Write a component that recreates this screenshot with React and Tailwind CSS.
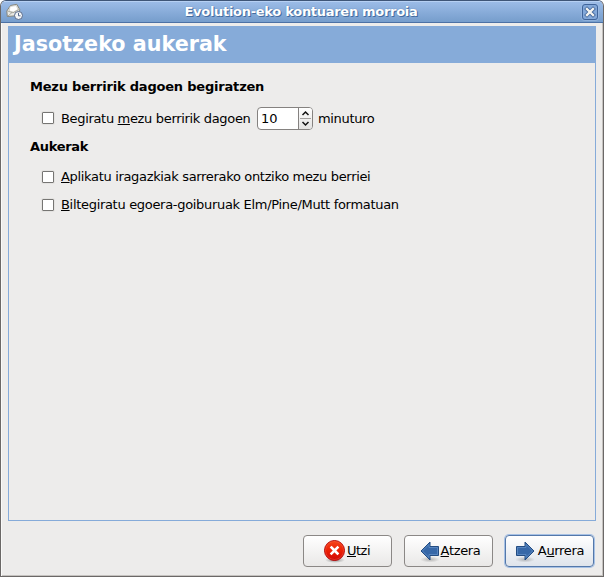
import React from "react";

function Checkbox() {
  return (
    <span
      role="checkbox"
      aria-checked="false"
      className="block h-[12px] w-[12px] shrink-0 rounded-[1px] border border-[#767573] bg-white shadow-[0_0_0_1px_#e4e3e1]"
    />
  );
}

function Key({ children }) {
  return <span className="underline decoration-1 underline-offset-[1px]">{children}</span>;
}

function MailClockIcon() {
  return (
    <svg width="18" height="18" viewBox="0 0 18 18" aria-hidden="true">
      <path d="M.8 8 4.5 2.5 10.8 1.3 13.7 6.5 13.2 12.5 1.3 13.5Z" fill="#e9e9e4" stroke="#85857c" />
      <path d="M4 3.5 10.3 2.5 12 6.5 7.5 9 3.3 8Z" fill="#fff" stroke="#bdbdb6" strokeWidth=".6" />
      <path d="M1.5 8 7 9.8 13 6.5M2 13 6 9.5" fill="none" stroke="#99998f" strokeWidth=".8" />
      <circle cx="12.5" cy="12.5" r="4" fill="#f4f6f8" stroke="#57698a" />
      <path d="M12.5 9.8v3h2" fill="none" stroke="#57698a" />
    </svg>
  );
}

function CloseIcon() {
  return (
    <svg width="18" height="18" viewBox="0 0 18 18" aria-hidden="true">
      <rect x=".5" y=".5" width="17" height="17" rx="3" fill="none" stroke="#a5c2e8" strokeOpacity=".5" />
      <rect x="1.5" y="1.5" width="15" height="15" rx="2.5" fill="#83a8d9" stroke="#3f649a" />
      <path d="m6 6 6 6m0-6-6 6" stroke="#3f6499" strokeWidth="4" strokeLinecap="square" />
      <path d="m6 6 6 6m0-6-6 6" stroke="#f5f4f0" strokeWidth="2.4" strokeLinecap="square" />
    </svg>
  );
}

function CancelIcon() {
  return (
    <svg width="24" height="24" viewBox="0 0 24 24" className="shrink-0" aria-hidden="true">
      <defs>
        <linearGradient id="cancel" x2="0" y2="1">
          <stop stopColor="#f4471b" />
          <stop offset=".5" stopColor="#ec2005" />
          <stop offset="1" stopColor="#cf0808" />
        </linearGradient>
        <radialGradient id="shade">
          <stop stopColor="#000" stopOpacity=".4" />
          <stop offset="1" stopColor="#000" stopOpacity="0" />
        </radialGradient>
      </defs>
      <ellipse cx="12" cy="21" rx="10" ry="3" fill="url(#shade)" />
      <circle cx="11.5" cy="11.5" r="10" fill="url(#cancel)" stroke="#b50b0b" />
      <circle cx="11.5" cy="11.5" r="9" fill="none" stroke="#ff6448" strokeOpacity=".4" />
      <path d="m8.5 8.5 6 6m0-6-6 6" stroke="#fff" strokeWidth="2.5" strokeLinecap="square" />
    </svg>
  );
}

function ArrowIcon({ back }) {
  return (
    <svg width="24" height="24" viewBox="0 0 24 24" aria-hidden="true" className={back ? "shrink-0 -scale-x-100" : "shrink-0"}>
      <defs>
        <radialGradient id={back ? "shadowBack" : "shadowNext"}>
          <stop stopColor="#000" stopOpacity=".25" />
          <stop offset="1" stopColor="#000" stopOpacity="0" />
        </radialGradient>
      </defs>
      <ellipse cx="11" cy="20.5" rx="10" ry="3" fill={back ? "url(#shadowBack)" : "url(#shadowNext)"} />
      <path d="M2.5 7.5H11V3L20 12 11 21V16.5H2.5Z" fill="#3768a8" stroke="#234c82" />
      <path d="M3.5 15.5V8.5H12V5.4L18.6 12 12 18.6V15.5Z" fill="none" stroke="#6c99cf" strokeOpacity=".6" />
    </svg>
  );
}

const button =
  "flex h-[32px] w-[89px] items-center justify-center rounded-[4px] border whitespace-nowrap";

export default function App() {
  return (
    <div className="h-[577px] w-[604px] overflow-hidden bg-white font-['DejaVu_Sans',sans-serif] text-[13px] leading-[16px] tracking-[-0.33px] text-black">
      <div className="flex h-[577px] flex-col overflow-hidden rounded-t-[6px] border border-x-[#6b6867] border-t-[#3e5577] border-b-[#6b6867] bg-[#edeceb] shadow-[inset_1px_0_#fafaf9,inset_-1px_-1px_#c5c2bf]">
        <header className="flex h-[22px] shrink-0 items-center justify-between border-t border-b border-t-[#b6d0f3] border-b-[#4c71a5] bg-linear-to-b from-[#9bbbe7] to-[#769dcc] pr-[4px] pl-[5px]">
          <MailClockIcon />
          <h1 className="mr-[3px] text-[13px] font-bold tracking-[-0.29px] whitespace-nowrap text-white [text-shadow:1px_1px_#456c9f,0_0_1px_#456c9f]">
            Evolution-eko kontuaren morroia
          </h1>
          <CloseIcon />
        </header>
        <main className="mx-[7px] mt-[3px] flex h-[495px] shrink-0 flex-col border border-[#86abd9]">
          <h2 className="flex h-[36px] shrink-0 items-center bg-[#86abd9] pb-[2px] pl-[5px] text-[20.7px] font-bold tracking-normal whitespace-nowrap text-white">
            Jasotzeko aukerak
          </h2>
          <section className="flex flex-col pt-[16px] pl-[21px] whitespace-nowrap">
            <h3 className="font-bold tracking-[-0.2px]">Mezu berririk dagoen begiratzen</h3>
            <div className="mt-[12px] flex h-[24px] items-center pl-[12px]">
              <div className="pb-[2px]"><Checkbox /></div>
              <span className="ml-[7px] w-[196px]">
                Begiratu <Key>m</Key>ezu berririk dagoen
              </span>
              <div className="flex h-[23px] w-[56px] self-start overflow-hidden rounded-[4px] border border-[#858280] bg-white">
                <span className="flex w-[41px] items-center border-r border-[#858280] pt-px pl-[3px] tracking-normal">10</span>
                <svg width="13" height="21" viewBox="0 0 13 21" className="bg-linear-to-b from-white to-[#e3e2e1]" aria-hidden="true">
                  <path d="M1 10.5h11" stroke="#a3a09e" />
                  <path d="m3.5 7 3-3 3 3M3.5 14l3 3 3-3" fill="none" stroke="#111" strokeWidth="1.5" />
                </svg>
              </div>
              <span className="ml-[5px]">minuturo</span>
            </div>
            <h3 className="mt-[8px] font-bold tracking-[-0.3px]">Aukerak</h3>
            <div className="mt-[14px] flex items-center pl-[12px]">
              <Checkbox />
              <span className="ml-[7px]"><Key>A</Key>plikatu iragazkiak sarrerako ontziko mezu berriei</span>
            </div>
            <div className="mt-[12px] flex items-center pl-[12px]">
              <Checkbox />
              <span className="ml-[7px] tracking-[-0.31px]"><Key>B</Key>iltegiratu egoera-goiburuak Elm/Pine/Mutt formatuan</span>
            </div>
          </section>
        </main>
        <footer className="mt-[14px] flex justify-end gap-[12px] pr-[9px]">
          <button className={button + " border-[#8b8886] bg-linear-to-b from-white to-[#e9e8e7]"}>
            <CancelIcon /><span className="pr-[2px] tracking-[-0.5px]"><Key>U</Key>tzi</span>
          </button>
          <button className={button + " border-[#8b8886] bg-linear-to-b from-white to-[#e9e8e7]"}>
            <ArrowIcon back /><span><Key>A</Key>tzera</span>
          </button>
          <button className={button + " border-[#5478aa] bg-linear-to-b from-white to-[#dfe4eb] shadow-[0_0_0_1px_#a6c1e5]"}>
            <ArrowIcon /><span className="pr-px">A<Key>u</Key>rrera</span>
          </button>
        </footer>
      </div>
    </div>
  );
}
